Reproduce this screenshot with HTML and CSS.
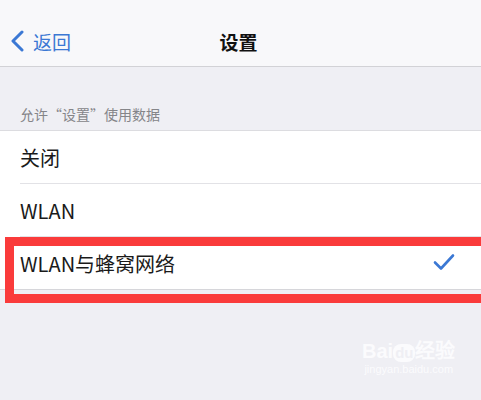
FILE: index.html
```html
<!DOCTYPE html>
<html lang="zh-CN">
<head>
  <meta charset="UTF-8">
  <title>设置</title>
  <link rel="stylesheet" href="styles.css">
</head>
<body>
  <div class="navbar">
    <div class="back">
      <svg class="chevron" width="14" height="22" viewBox="0 0 14 22">
        <path d="M12 2 L3 11 L12 20" fill="none" stroke="#3b78d4" stroke-width="3" stroke-linecap="round" stroke-linejoin="round"/>
      </svg>
      <span>返回</span>
    </div>
    <div class="title">设置</div>
  </div>

  <div class="section-header">允许“设置”使用数据</div>

  <div class="list">
    <div class="row">关闭</div>
    <div class="row">WLAN</div>
    <div class="row selected">
      <span>WLAN与蜂窝网络</span>
      <svg class="check" width="22" height="18" viewBox="0 0 22 18">
        <path d="M2 9.5 L8 15.5 L20 2.5" fill="none" stroke="#3b78d4" stroke-width="2.6" stroke-linecap="round" stroke-linejoin="round"/>
      </svg>
    </div>
  </div>

  <!-- highlight box drawn over the last row -->
  <div class="highlight"></div>

  <div class="watermark">
    <div class="wm-logo">Bai<span class="wm-du">du</span>经验</div>
    <div class="wm-url">jingyan.baidu.com</div>
  </div>
</body>
</html>
```

FILE: styles.css
```css
body {
  margin: 0;
  background-color: #efeff4;
  font-family: "Noto Sans CJK SC", "Noto Sans", sans-serif;
  color: #1a1a1a;
  position: relative;
  height: 400px;
  overflow: hidden;
}
.navbar {
  height: 66px;
  background: #f8f8fa;
  border-bottom: 1px solid #d2d2d6;
  display: flex;
  align-items: center;
  justify-content: center;
  position: relative;
}
.back {
  position: absolute;
  left: 10px;
  top: 0;
  height: 100%;
  display: flex;
  align-items: center;
  gap: 9px;
  color: #3b78d4;
  font-size: 19px;
  padding-top: 16px;
  box-sizing: border-box;
}
.chevron {
  display: block;
}
.title {
  font-size: 19px;
  font-weight: bold;
  padding-top: 16px;
  padding-right: 4px;
  color: #111;
}
.section-header {
  height: 64px;
  box-sizing: border-box;
  padding: 0 20px 6px;
  display: flex;
  align-items: flex-end;
  font-size: 14px;
  color: #858589;
  border-bottom: 1px solid #dcdce0;
}
.list {
  background: #fff;
  border-bottom: 1px solid #d6d6da;
}
.row {
  height: 52px;
  margin-left: 20px;
  padding-right: 26px;
  display: flex;
  align-items: center;
  justify-content: space-between;
  font-size: 20px;
  border-bottom: 1px solid #e2e2e6;
}
.row:last-child {
  border-bottom: none;
}
.check {
  display: block;
  margin-top: -2px;
}
.highlight {
  position: absolute;
  left: 5px;
  top: 237px;
  width: 500px;
  height: 66px;
  box-sizing: border-box;
  border: 9px solid #fa3b3b;
}
.watermark {
  position: absolute;
  left: 362px;
  top: 340px;
  color: #fbfbfd;
  text-align: center;
  font-family: "Liberation Sans", sans-serif;
}
.wm-logo {
  font-size: 20px;
  font-weight: bold;
  line-height: 22px;
}
.wm-du {
  display: inline-block;
  background: #fbfbfd;
  color: #efeff4;
  border-radius: 8px;
  padding: 0 2px;
  font-size: 15px;
  line-height: 18px;
}
.wm-url {
  font-size: 11px;
  line-height: 14px;
}
```
